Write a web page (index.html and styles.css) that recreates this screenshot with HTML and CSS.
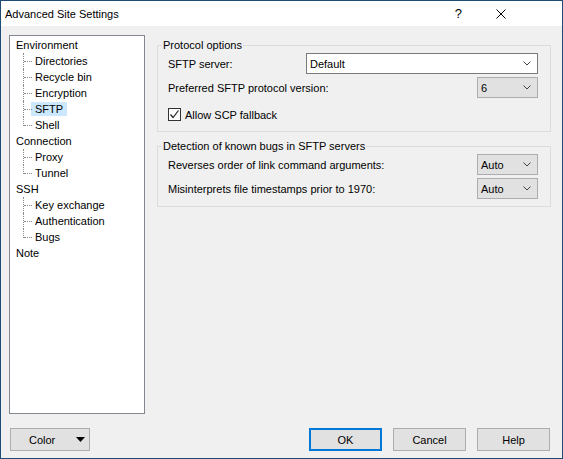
FILE: index.html
```html
<!DOCTYPE html>
<html>
<head>
<meta charset="utf-8">
<link rel="stylesheet" href="styles.css">
</head>
<body>
<div class="window">
  <div class="titlebar">
    <span class="title">Advanced Site Settings</span>
    <span class="help">?</span>
    <svg class="close" width="10" height="10" viewBox="0 0 10 10"><path d="M0.5 0.5 L9.5 9.5 M9.5 0.5 L0.5 9.5" stroke="#000" stroke-width="1"/></svg>
  </div>
  <div class="main">
    <div class="tree">
      <ul class="roots">
        <li class="root"><span class="lbl">Environment</span>
          <ul class="children">
            <li><span class="lbl">Directories</span></li>
            <li><span class="lbl">Recycle bin</span></li>
            <li><span class="lbl">Encryption</span></li>
            <li><span class="lbl sel">SFTP</span></li>
            <li><span class="lbl">Shell</span></li>
          </ul>
        </li>
        <li class="root"><span class="lbl">Connection</span>
          <ul class="children">
            <li><span class="lbl">Proxy</span></li>
            <li><span class="lbl">Tunnel</span></li>
          </ul>
        </li>
        <li class="root"><span class="lbl">SSH</span>
          <ul class="children">
            <li><span class="lbl">Key exchange</span></li>
            <li><span class="lbl">Authentication</span></li>
            <li><span class="lbl">Bugs</span></li>
          </ul>
        </li>
        <li class="root"><span class="lbl">Note</span></li>
      </ul>
    </div>
    <div class="panel">
      <div class="group">
        <div class="glabel">Protocol options</div>
        <div class="row">
          <span class="rlabel">SFTP server:</span>
          <div class="combo edit wide"><span>Default</span><svg width="8" height="5" viewBox="0 0 8 5"><path d="M0.5 0.5 L4 4 L7.5 0.5" fill="none" stroke="#444" stroke-width="1"/></svg></div>
        </div>
        <div class="row">
          <span class="rlabel">Preferred SFTP protocol version:</span>
          <div class="combo small"><span>6</span><svg width="8" height="5" viewBox="0 0 8 5"><path d="M0.5 0.5 L4 4 L7.5 0.5" fill="none" stroke="#444" stroke-width="1"/></svg></div>
        </div>
        <div class="checkrow">
          <span class="checkbox"><svg width="11" height="11" viewBox="0 0 11 11"><path d="M1.5 5.5 L4 8.5 L9.5 1.5" fill="none" stroke="#222" stroke-width="1.2"/></svg></span>
          <span>Allow SCP fallback</span>
        </div>
      </div>
      <div class="group second">
        <div class="glabel">Detection of known bugs in SFTP servers</div>
        <div class="row">
          <span class="rlabel">Reverses order of link command arguments:</span>
          <div class="combo small"><span>Auto</span><svg width="8" height="5" viewBox="0 0 8 5"><path d="M0.5 0.5 L4 4 L7.5 0.5" fill="none" stroke="#444" stroke-width="1"/></svg></div>
        </div>
        <div class="row">
          <span class="rlabel">Misinterprets file timestamps prior to 1970:</span>
          <div class="combo small"><span>Auto</span><svg width="8" height="5" viewBox="0 0 8 5"><path d="M0.5 0.5 L4 4 L7.5 0.5" fill="none" stroke="#444" stroke-width="1"/></svg></div>
        </div>
      </div>
    </div>
  </div>
  <div class="footer">
    <div class="btn color"><span class="ctext">Color</span><svg width="9" height="5" viewBox="0 0 9 5"><path d="M0 0 L9 0 L4.5 5 Z" fill="#000"/></svg></div>
    <div class="spacer"></div>
    <div class="btn default">OK</div>
    <div class="btn">Cancel</div>
    <div class="btn">Help</div>
  </div>
</div>
</body>
</html>
```
FILE: styles.css
```css
html, body {
  margin: 0;
  padding: 0;
}
body {
  font-family: "Segoe UI", "Liberation Sans", Arial, sans-serif;
  font-size: 11px;
  color: #000;
  background: #f0f0f0;
}
.window {
  box-sizing: border-box;
  width: 563px;
  height: 459px;
  border: 1px solid #1e4c74;
  background: #f0f0f0;
  display: flex;
  flex-direction: column;
}
.titlebar {
  height: 25px;
  background: #fff;
  display: flex;
  align-items: center;
  flex: none;
}
.title {
  flex: 1;
  padding-left: 4px;
  font-size: 11px;
}
.help {
  font-size: 13px;
  margin-right: 34px;
}
.close {
  margin-right: 56px;
  display: block;
}
.main {
  display: flex;
  gap: 12px;
  padding: 9px 11px 0 8px;
  flex: none;
}
.tree {
  box-sizing: border-box;
  width: 136px;
  height: 379px;
  background: #fff;
  border: 1px solid #828790;
  padding: 1px 0 0 2px;
}
.tree ul {
  list-style: none;
  margin: 0;
  padding: 0;
}
.tree li {
  line-height: 16px;
}
.lbl {
  display: inline-block;
  padding: 0 4px;
  line-height: 14px;
  margin: 1px 0;
}
.lbl.sel {
  background: #cce8ff;
}
.children li {
  position: relative;
  padding-left: 19px;
}
.children li::before {
  content: "";
  position: absolute;
  left: 11px;
  top: 0;
  height: 100%;
  border-left: 1px dotted #8a8a8a;
}
.children li:last-child::before {
  height: 9px;
}
.children li::after {
  content: "";
  position: absolute;
  left: 12px;
  top: 8px;
  width: 8px;
  border-top: 1px dotted #8a8a8a;
}
.panel {
  flex: 1;
  padding-top: 10px;
}
.group {
  border: 1px solid #dcdcdc;
  padding: 0 12px 9px 10px;
}
.group.second {
  margin-top: 14px;
  padding-bottom: 7px;
}
.glabel {
  width: fit-content;
  margin: -8px 0 0 -6px;
  padding: 0 1px;
  line-height: 14px;
  background: #f0f0f0;
}
.row {
  display: flex;
  align-items: center;
  justify-content: space-between;
  margin-top: 3px;
}
.glabel + .row {
  margin-top: 1px;
}
.combo {
  box-sizing: border-box;
  height: 21px;
  display: flex;
  align-items: center;
  justify-content: space-between;
  padding: 0 6px 0 3px;
  border: 1px solid #adadad;
  background: #e1e1e1;
}
.combo svg {
  display: block;
}
.combo.edit {
  background: #fff;
  border-color: #7a7a7a;
}
.combo.wide {
  width: 232px;
}
.combo.small {
  width: 61px;
}
.checkrow {
  display: flex;
  align-items: center;
  gap: 4px;
  margin-top: 9px;
  height: 15px;
}
.checkbox {
  box-sizing: border-box;
  width: 13px;
  height: 13px;
  border: 1px solid #333;
  background: #fff;
  display: flex;
  align-items: center;
  justify-content: center;
}
.checkbox svg {
  display: block;
}
.footer {
  display: flex;
  gap: 11px;
  margin-top: 14px;
  padding: 0 12px 0 9px;
}
.spacer {
  flex: 1;
}
.btn {
  box-sizing: border-box;
  width: 73px;
  height: 23px;
  border: 1px solid #adadad;
  background: #e1e1e1;
  display: flex;
  align-items: center;
  justify-content: center;
}
.btn.default {
  border: 2px solid #0078d7;
}
.btn.color {
  width: 80px;
  justify-content: flex-start;
  padding: 0 4px 0 18px;
}
.btn.color .ctext {
  flex: 1;
}
.btn.color svg {
  display: block;
}
```
